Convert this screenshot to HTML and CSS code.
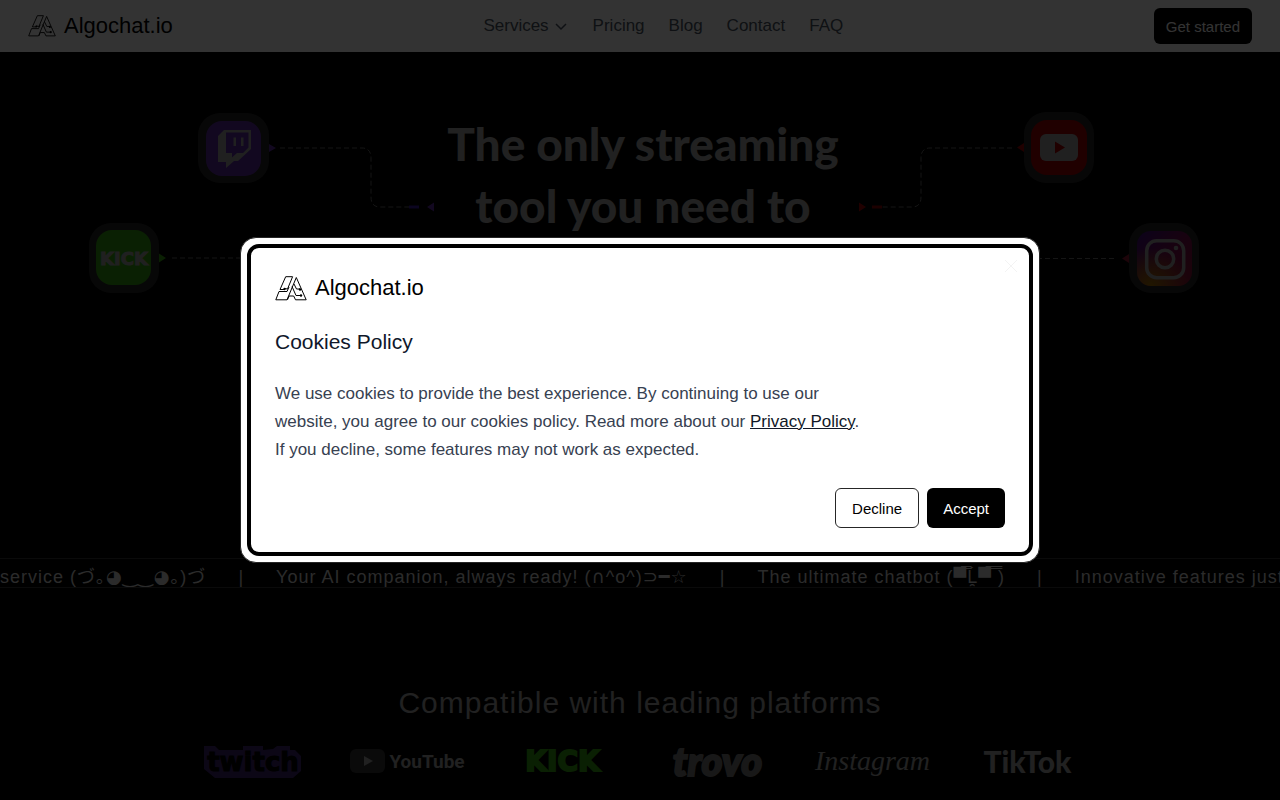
FILE: index.html
```html
<!DOCTYPE html>
<html lang="en">
<head>
	<meta charset="utf-8" />
	<meta name="viewport" content="width=device-width, initial-scale=1" />
	<title>Algochat.io</title>
	<link rel="stylesheet" href="styles.css">
</head>
<body>
	<svg class="defs" aria-hidden="true">
		<symbol id="mark" viewBox="0 0 32 25">
			<path fill="none" stroke="currentColor" d="M5 13.500L10.700.7H17.600L12.500 13L9.500 12.500M5 13.500H9M4 15.500H12L14 11M4 15.500L.8 23.800H12L21.300 1.500L31.200 23.800H20.500L18.700 20H14L12.500 23.800M17 10.500L21 19.500H26M19 8L21.500 13H25"/>
			<circle cx="9.500" cy="13" r="1.200" fill="currentColor"/>
			<circle cx="25" cy="13.500" r="1.200" fill="currentColor"/>
			<circle cx="26" cy="19.500" r="1.200" fill="currentColor"/>
		</symbol>
	</svg>

	<header class="header">
		<a class="brand" href="#"><svg class="mark-sm"><use href="#mark"/></svg>Algochat.io</a>
		<nav class="nav">
			<a href="#">Services <svg class="chevron" viewBox="0 0 16 16"><path d="M3 6l5 5 5-5"/></svg></a>
			<a href="#">Pricing</a>
			<a href="#">Blog</a>
			<a href="#">Contact</a>
			<a href="#">FAQ</a>
		</nav>
		<button class="start" type="button">Get started</button>
	</header>

	<main>
		<section class="hero">
			<svg class="diagram" viewBox="0 52 1280 506" aria-hidden="true">
				<defs>
					<linearGradient id="insta" x1="0" y1="0" x2="1" y2="1">
						<stop offset="0" stop-color="#5b14d0"/>
						<stop offset=".5" stop-color="#c0107c"/>
						<stop offset="1" stop-color="#e0204c"/>
					</linearGradient>
					<radialGradient id="glow" cx=".25" cy="1" r=".7">
						<stop offset="0" stop-color="#ffb400"/>
						<stop offset="1" stop-color="#ffb400" stop-opacity="0"/>
					</radialGradient>
				</defs>
				<!-- wires -->
				<g class="wire">
					<path d="M280 148H362Q371 148 371 158V197Q371 207 380 207H410"/>
					<path d="M172 258H400"/>
					<path d="M1012 148H930Q921 148 921 158V197Q921 207 912 207H882"/>
					<path d="M1114 258.500H880"/>
				</g>
				<path d="M409 207H419" stroke="#5b2cff" stroke-width="3"/>
				<path d="M872 207H882" stroke="#e00000" stroke-width="3"/>
				<path d="M269 144l7 4-7 4zM434 202.500v9l-7-4.500z" fill="#9146ff"/>
				<path d="M159 253.500l7 4.500-7 4.500z" fill="#53fc18"/>
				<path d="M859 202.500v9l7-4.500zM1024 143v9l-7-4.500z" fill="#f00"/>
				<path d="M1129 254v9l-7-4.500z" fill="#e0204c"/>
				<!-- twitch -->
				<rect class="tile" x="198" y="113" width="71" height="70" rx="22"/>
				<rect x="206" y="121" width="55" height="55" rx="16" fill="#9146ff"/>
				<path fill="#fff" fill-rule="evenodd" d="M224 130H251V149L238 161H234L226 168V162H218V136ZM226 132.500V153H232V157.500L237 153H243L248.500 147.500V132.500ZM233.500 137.500H236V146H233.500ZM241 137.500H243.500V146H241Z"/>
				<!-- kick -->
				<rect class="tile" x="89" y="223" width="70" height="70" rx="22"/>
				<rect x="96" y="230" width="55" height="55" rx="16" fill="#53fc18"/>
				<text class="kick-text" x="124" y="265" text-anchor="middle">KICK</text>
				<!-- youtube -->
				<rect class="tile" x="1024" y="112" width="70" height="71" rx="22"/>
				<rect x="1031" y="120" width="56" height="55" rx="16" fill="#f00"/>
				<rect x="1040" y="134" width="38" height="27" rx="6" fill="#fff"/>
				<path d="M1055 141.500v12l10-6z" fill="#f00"/>
				<!-- instagram -->
				<rect class="tile" x="1129" y="223" width="70" height="70" rx="22"/>
				<rect x="1137" y="231" width="55" height="55" rx="14" fill="url(#insta)"/>
				<rect x="1137" y="231" width="55" height="55" rx="14" fill="url(#glow)"/>
				<g fill="none" stroke="#fff" stroke-width="3.500">
					<rect x="1146.700" y="240.700" width="37" height="37" rx="10"/>
					<circle cx="1165" cy="259" r="8.700"/>
				</g>
				<circle cx="1176" cy="248" r="2.300" fill="#fff"/>
			</svg>
			<h1>The only streaming<br>tool you need to</h1>
		</section>

		<div class="ticker">
			<span>service (づ｡<b>◕‿‿◕</b>｡)づ</span><i>|</i>
			<span>Your AI companion, always ready! (<b>∩</b>^o^)⊃━☆</span><i>|</i>
			<span>The ultimate chatbot (▀̿Ĺ̯▀̿ ̿)</span><i>|</i>
			<span>Innovative features just for you</span>
		</div>

		<section class="platforms">
			<h2>Compatible with leading platforms</h2>
			<ul>
				<li>
					<svg width="100" height="36" viewBox="0 0 100 36">
						<path class="tw-shade" d="M1 3H12L16 7H40V3H60V7L70 6L74 3H87V7H92L98 13V28L90 35H12L1 26z"/>
						<text class="tw-text" x="50" y="28" text-anchor="middle">twitch</text>
					</svg>
				</li>
				<li class="youtube">
					<svg width="36" height="24" viewBox="0 0 36 24"><rect width="35" height="24" rx="6" fill="#333"/><path d="M14 7v10l9-5z" fill="#a3a3a3"/></svg>YouTube
				</li>
				<li class="kick">KICK</li>
				<li class="trovo">trovo</li>
				<li class="instagram">Instagram</li>
				<li class="tiktok">TikTok</li>
			</ul>
		</section>
	</main>

	<div class="overlay">
		<div class="dialog" role="dialog" aria-modal="true" aria-labelledby="cookies-title">
			<div class="panel">
				<button class="close" type="button" aria-label="Close"><svg viewBox="0 0 16 16"><path d="M2 2l12 12M14 2L2 14"/></svg></button>
				<a class="brand" href="#"><svg class="mark"><use href="#mark"/></svg>Algochat.io</a>
				<h3 id="cookies-title">Cookies Policy</h3>
				<p>We use cookies to provide the best experience. By continuing to use our website, you agree to our cookies policy. Read more about our <a href="#">Privacy Policy</a>. If you decline, some features may not work as expected.</p>
				<div class="actions">
					<button class="decline" type="button">Decline</button>
					<button class="accept" type="button">Accept</button>
				</div>
			</div>
		</div>
	</div>
</body>
</html>
```
FILE: styles.css
```css
*{
	margin: 0;
	padding: 0;
	box-sizing: border-box;
}
body{
	background: #000;
	color: #fff;
	font-family: "Liberation Sans", "DejaVu Sans", "Noto Sans CJK JP", sans-serif;
	font-size: 17px;
	overflow: hidden;
}
a{
	color: inherit;
	text-decoration: none;
}
button{
	font: inherit;
	font-size: 15px;
	border: 0;
	border-radius: 6px;
	cursor: pointer;
}
.defs{
	display: none;
}
/* header */
.header{
	display: flex;
	align-items: center;
	justify-content: space-between;
	height: 52px;
	padding: 0 28px;
	background: #fff;
}
.brand{
	display: flex;
	align-items: center;
	gap: 8px;
	height: 32px;
	color: #000;
	font-size: 22px;
}
.mark-sm{
	width: 28px;
	height: 22px;
}
.mark{
	width: 32px;
	height: 25px;
}
.nav{
	display: flex;
	gap: 24px;
	color: #4b5563;
}
.nav a{
	display: flex;
	align-items: center;
	gap: 4px;
}
.chevron{
	width: 16px;
	height: 16px;
	fill: none;
	stroke: currentColor;
	stroke-width: 1.5;
}
.start{
	height: 36px;
	padding: 0 12px;
	background: #000;
	color: #fff;
}
/* hero */
.hero{
	position: relative;
	height: 506px;
	padding: 61px 0 0 6px;
	overflow: hidden;
}
.diagram{
	position: absolute;
	top: 0;
	left: 50%;
	width: 1280px;
	height: 506px;
	margin-left: -640px;
	opacity: .63;
}
.tile{
	fill: #3c3c3c;
}
.wire{
	fill: none;
	stroke: #aaa;
	stroke-dasharray: 5 3;
}
.kick-text{
	font: 900 18px "DejaVu Sans", sans-serif;
	fill: #fff;
	stroke: #fff;
}
.hero h1{
	position: relative;
	font: 900 46px/62px Lato, sans-serif;
	text-align: center;
	color: #a3a3a3;
}
/* ticker */
.ticker{
	display: flex;
	gap: 32px;
	height: 30px;
	border-top: 1px solid #333;
	border-bottom: 1px solid #333;
	overflow: hidden;
	white-space: nowrap;
	font-size: 18px;
	line-height: 36px;
	letter-spacing: 1px;
	color: #d4d4d4;
}
.ticker span,
.ticker i{
	flex: none;
	font-style: normal;
}
.ticker b{
	font-family: "DejaVu Sans", sans-serif;
	font-weight: normal;
	line-height: 1;
}
/* platforms */
.platforms{
	padding: 95px 20px 16px;
	color: #a3a3a3;
}
.platforms h2{
	font-size: 30px;
	font-weight: normal;
	line-height: 40px;
	letter-spacing: 1px;
	text-align: center;
}
.platforms ul{
	display: grid;
	grid-template-columns: repeat(6, 1fr);
	max-width: 930px;
	height: 40px;
	margin: 18px auto 0;
	list-style: none;
}
.platforms li{
	display: flex;
	align-items: center;
	justify-content: center;
	gap: 3px;
}
.tw-shade{
	fill: #3d2470;
}
.tw-text{
	font: bold 26px "DejaVu Sans", sans-serif;
	fill: #000;
	stroke: #000;
	stroke-width: 1;
}
.youtube{
	font: bold 19px Roboto, sans-serif;
}
.kick{
	color: #34a00f;
	font: bold 28px "DejaVu Sans", sans-serif;
	-webkit-text-stroke: 2px #34a00f;
}
.trovo{
	font: italic 900 40px/36px Lato, sans-serif;
	color: #777;
	-webkit-text-stroke: 2px #777;
}
.instagram{
	font: italic 28px "Liberation Serif", serif;
}
.tiktok{
	font: 900 30px/30px Lato, sans-serif;
}
/* cookie dialog */
.overlay{
	position: fixed;
	inset: 0;
	display: flex;
	align-items: center;
	justify-content: center;
	background: rgba(0,0,0,.8);
}
.dialog{
	width: 100%;
	max-width: 800px;
	padding: 6px;
	background: #fff;
	border: 1px solid #262626;
	border-radius: 16px;
}
.panel{
	position: relative;
	padding: 24px;
	border: 4px solid #000;
	border-radius: 12px;
}
.close{
	position: absolute;
	top: 10px;
	right: 10px;
	width: 16px;
	height: 16px;
	background: none;
}
.close svg{
	display: block;
	fill: none;
	stroke: #f3f3f3;
}
.panel h3{
	margin: 24px 0;
	color: #0f172a;
	font-size: 21px;
	font-weight: normal;
	line-height: 28px;
}
.panel p{
	max-width: 590px;
	color: #374151;
	line-height: 28px;
}
.panel p a{
	color: #111827;
	text-decoration: underline;
}
.actions{
	display: flex;
	justify-content: flex-end;
	gap: 8px;
	margin-top: 24px;
}
.actions button{
	height: 40px;
	padding: 0 16px;
}
.decline{
	background: #fff;
	border: 1px solid #262626;
	color: #000;
}
.accept{
	background: #000;
	color: #fff;
}
```
